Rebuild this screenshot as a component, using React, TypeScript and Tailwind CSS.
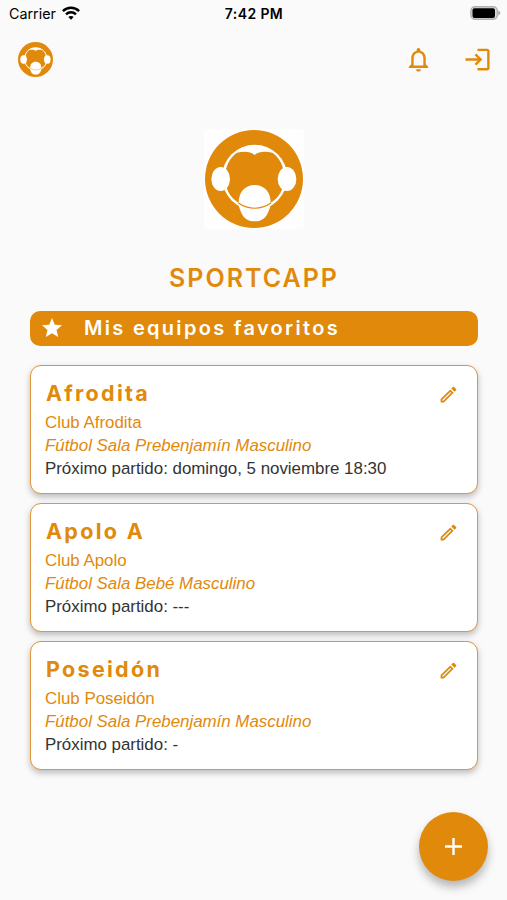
import { MdAdd, MdLogin, MdNotificationsNone, MdStar } from "react-icons/md";

type Team = {
  name: string;
  club: string;
  category: string;
  nextMatch: string;
};

const teams: Team[] = [
  {
    name: "Afrodita",
    club: "Club Afrodita",
    category: "Fútbol Sala Prebenjamín Masculino",
    nextMatch: "domingo, 5 noviembre 18:30",
  },
  { name: "Apolo A", club: "Club Apolo", category: "Fútbol Sala Bebé Masculino", nextMatch: "---" },
  { name: "Poseidón", club: "Club Poseidón", category: "Fútbol Sala Prebenjamín Masculino", nextMatch: "-" },
];

function Logo({ className }: { className?: string }) {
  return (
    <svg viewBox="30 31 294 294" className={className} aria-hidden="true">
      <circle cx="177" cy="178" r="147" fill="#e1890a" />
      <circle cx="179" cy="173" r="98" fill="#fff" />
      <path
        d="M179 106C168 96 148 94 126 99C104 113 90 143 90 173C90 208 106 234 130 249C150 260 164 263 179 263C194 263 208 260 228 249C252 234 268 208 268 173C268 143 254 113 232 99C210 94 190 96 179 106Z"
        fill="#e1890a"
      />
      <ellipse cx="77" cy="178" rx="28" ry="36" fill="#fff" />
      <ellipse cx="276" cy="178" rx="28" ry="36" fill="#fff" />
      <path d="M130 255C137 270 140 305 179 305C218 305 221 270 228 255Z" fill="#fff" />
      <path d="M131 249C131 216 151 196 179 196C207 196 227 216 227 249C210 260 195 265 179 265C163 265 148 260 131 249Z" fill="#fff" />
      <path d="M130 250C161 271 197 271 228 250" fill="none" stroke="#e1890a" strokeWidth="3.5" />
    </svg>
  );
}

function StatusBar() {
  return (
    <div className="grid h-7 grid-cols-3 items-center pl-[9px] pr-[6px] text-black">
      <div className="flex items-center gap-[6px]">
        <span className="text-[14.3px] leading-none">Carrier</span>
        <svg viewBox="0 0 18 14" className="-mt-0.5 h-[14px] w-[18px]" fill="none" stroke="currentColor" strokeWidth="2.5">
          <path d="M0.9 5.1C5.5 0.7 12.5 0.7 17.1 5.1" />
          <path d="M4 8.3C6.8 5.6 11.2 5.6 14 8.3" />
          <path d="M9 13.8L6.3 11.1C7.8 9.7 10.2 9.7 11.7 11.1Z" fill="currentColor" stroke="none" />
        </svg>
      </div>
      <span className="-ml-[2px] text-center text-[14px] font-semibold leading-none tracking-[0.4px]">7:42 PM</span>
      <svg viewBox="0 0 31 14" className="-mt-0.5 h-[14px] w-[31px] justify-self-end">
        <rect x="0.9" y="0.7" width="26.4" height="12.6" rx="4" fill="#ddd" stroke="#b0b0b0" strokeWidth="1.4" />
        <rect x="2.5" y="2.3" width="22.5" height="9.6" rx="2" fill="#000" />
        <path d="M28.3 4.5C31 5.8 31 8.2 28.3 9.5Z" fill="#aaa" />
      </svg>
    </div>
  );
}

function PencilIcon() {
  return (
    <svg viewBox="0 0 24 24" className="size-[21px]" fill="currentColor" aria-hidden="true">
      <path d="M14.06 9L15 9.94L5.92 19H5V18.08L14.06 9M17.66 3C17.41 3 17.15 3.1 16.96 3.29L15.13 5.12L18.88 8.87L20.71 7.04C21.1 6.65 21.1 6 20.71 5.63L18.37 3.29C18.17 3.09 17.92 3 17.66 3M14.06 6.19L3 17.25V21H6.75L17.81 9.94L14.06 6.19Z" />
    </svg>
  );
}

function TeamCard({ team }: { team: Team }) {
  return (
    <article className="h-[129px] rounded-[11px] border-[1.5px] border-[#e1963a] bg-white pl-[14px] pr-[18px] pt-[14px] shadow-[0_3px_6px_rgba(0,0,0,0.25)]">
      <div className="flex h-[29px] items-center justify-between">
        <h2 className="-mt-0.5 ml-px font-[Inter,sans-serif] text-[21.5px] font-bold leading-none tracking-[2.3px]">
          {team.name}
        </h2>
        <PencilIcon />
      </div>
      <div className="pt-0.5 text-[16.9px] leading-[23px] tracking-[-0.01px]">
        <p>{team.club}</p>
        <p className="italic">{team.category}</p>
        <p className="text-[#333]">Próximo partido: {team.nextMatch}</p>
      </div>
    </article>
  );
}

export default function App() {
  return (
    <div className="relative h-[900px] w-[507px] overflow-hidden bg-[#fafafa] font-['Liberation_Sans',Arial,sans-serif] text-[#e1890a]">
      <div className="font-[Inter,sans-serif]">
        <StatusBar />
      </div>

      <header className="flex h-16 items-center justify-between pl-[18px] pr-[15px]">
        <Logo className="-mt-0.5 size-[35px]" />
        <div className="flex items-center gap-[30px] pb-px">
          <MdNotificationsNone className="size-[29px]" />
          <MdLogin className="size-[29px]" />
        </div>
      </header>

      <main className="pl-[30px] pr-[29px] pt-[37px]">
        <div className="mx-auto size-[100px] rounded-sm bg-[#fefefe] p-px">
          <Logo className="size-[98px]" />
        </div>
        <h1 className="mt-9 text-center font-[Inter,sans-serif] text-[25px] font-semibold leading-[26px] tracking-[2px]">
          SPORTCAPP
        </h1>

        <div className="mt-5 flex h-[35px] items-center rounded-[10px] bg-[#e1890a] pl-[10px] text-white">
          <MdStar className="-mt-px size-6" />
          <span className="-mt-0.5 ml-5 font-[Inter,sans-serif] text-[20px] font-semibold leading-none tracking-[2.3px]">
            Mis equipos favoritos
          </span>
        </div>

        <section className="mt-[19px] flex flex-col gap-[9px]">
          {teams.map((team) => (
            <TeamCard key={team.name} team={team} />
          ))}
        </section>
      </main>

      <button
        type="button"
        aria-label="Añadir equipo"
        className="absolute bottom-[19px] right-[19px] flex size-[69px] items-center justify-center rounded-full bg-[#e1890a] text-white shadow-[0_6px_10px_rgba(0,0,0,0.28)]"
      >
        <MdAdd className="size-[29px]" />
      </button>
    </div>
  );
}
